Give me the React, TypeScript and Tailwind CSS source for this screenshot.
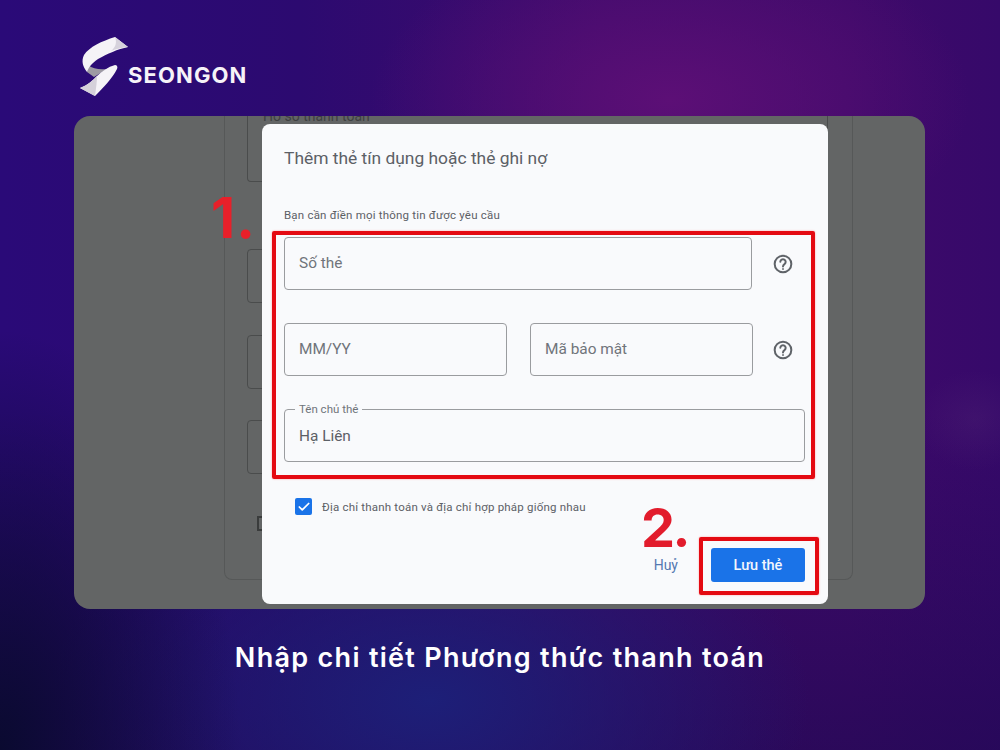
import { Check } from "lucide-react";

function Logo() {
  return (
    <svg width="50" height="60" viewBox="0 0 50 60" className="shrink-0">
      <path d="M8 29 L7 36 L14 41 L27 33 C20 34 13 33 8 29 Z" fill="#9d9aa3" />
      <path d="M35 1 C22 5 9 11 4 19 C1 25 3 31 7 36 C9 31 11 28 18 23 C27 18 38 13 48 11 Z" fill="#f5f3f7" />
      <path d="M35 1 L48 11 C42 11.5 36 13 31 15 C36 11 37 6 35 1 Z" fill="#d6d2dc" />
      <path d="M35 29 C37 29 38 31 37 33 C32 43 23 52 15 60 L0 52 C8 49 13 44 17 40 C22 35 28 31 35 29 Z" fill="#f5f3f7" />
      <path d="M17 40 C13 44 8 49 0 52 L15 60 C16 52 17 46 17 40 Z" fill="#d5d1da" />
    </svg>
  );
}

function Help() {
  return (
    <svg width="20" height="20" viewBox="0 0 24 24" className="shrink-0" fill="none" stroke="#5f6368" strokeWidth="2.4">
      <circle cx="12" cy="12" r="10" />
      <path d="M8.8 9.4a3.2 3.2 0 1 1 5 2.7c-1.2.8-1.8 1.4-1.8 2.9" strokeLinecap="round" />
      <circle cx="12" cy="18" r="0.6" fill="#5f6368" strokeWidth="1.2" />
    </svg>
  );
}

function Field({ text, className }: { text: string; className: string }) {
  return (
    <div className={`h-[53px] rounded-[4px] border border-[#9a9c9f] pl-[14px] flex items-center text-[15.4px] text-[#70747a] ${className}`}>
      {text}
    </div>
  );
}

export default function App() {
  return (
    <div className="relative w-[1000px] h-[750px] overflow-hidden font-['Roboto',sans-serif] bg-[radial-gradient(ellipse_300px_170px_at_670px_100px,#5c0f76_0%,rgba(92,15,118,0)_100%),radial-gradient(ellipse_240px_420px_at_0px_750px,#0a0a30_0%,rgba(10,10,48,0)_100%),radial-gradient(ellipse_380px_230px_at_430px_700px,#1d1f78_0%,rgba(29,31,120,0)_100%),radial-gradient(ellipse_60px_50px_at_975px_420px,rgba(90,50,120,0.22)_0%,rgba(90,50,120,0)_100%),linear-gradient(180deg,rgba(30,8,80,0)_55%,rgba(30,8,80,0.6)_100%),linear-gradient(90deg,#2a0a78_0%,#2c0a70_30%,#3f0b6c_60%,#3f0a6a_85%,#36096a_100%)]">
      <header className="h-[116px] pl-[80px] pt-[36px] flex items-start">
        <Logo />
        <span className="mt-[26px] -ml-[2px] text-[22px] leading-[26px] font-bold tracking-[1.1px] text-[#f6f3f8] font-['Inter',sans-serif]">
          SEONGON
        </span>
      </header>

      <div className="relative mx-[74px] w-[851px] h-[493px] overflow-hidden rounded-2xl bg-[#636565]">
        <div className="ml-[150px] w-[629px] h-[464px] rounded-b-lg border border-t-0 border-[#565858] flex flex-col pl-[22px] pr-[24px]">
          <div className="relative h-[66px] rounded-b border border-t-0 border-[#4a4c4c]">
            <span className="absolute left-[15px] top-[-8px] text-[14px] leading-[16px] text-[#3f4141]">Hồ sơ thanh toán</span>
          </div>
          <div className="mt-[67px] h-[54px] rounded border border-[#4a4c4c]" />
          <div className="mt-[32px] h-[54px] rounded border border-[#4a4c4c]" />
          <div className="mt-[31px] h-[54px] rounded border border-[#4a4c4c]" />
          <div className="mt-[42px] ml-[10px] w-[15px] h-[15px] border-2 border-[#3a3c3c]" />
        </div>

        {/* modal */}
        <div className="absolute left-[188px] top-[8px] w-[566px] h-[480px] rounded-lg bg-[#f9fafc] pl-[22px] pr-[23px] flex flex-col">
          <h2 className="mt-[22px] text-[17.4px] leading-[24px] text-[#5c6066]">Thêm thẻ tín dụng hoặc thẻ ghi nợ</h2>
          <p className="mt-[37px] text-[11.5px] leading-[16px] tracking-[0.2px] text-[#5c6066]">Bạn cần điền mọi thông tin được yêu cầu</p>

          <div className="mt-[14px] flex items-center gap-[21px]">
            <Field text="Số thẻ" className="w-[468px]" />
            <Help />
          </div>
          <div className="mt-[33px] flex items-center">
            <Field text="MM/YY" className="w-[223px]" />
            <Field text="Mã bảo mật" className="w-[223px] ml-[23px]" />
            <div className="ml-[20px]">
              <Help />
            </div>
          </div>
          <div className="relative mt-[33px] h-[53px] w-[521px] rounded-[4px] border border-[#9a9c9f] pl-[14px] flex items-center text-[15.4px] text-[#5c6066]">
            <span className="absolute left-[10px] top-[-7px] px-[4px] bg-[#f9fafc] text-[11.5px] leading-[13px] text-[#70747a]">Tên chủ thẻ</span>
            <span className="mt-[2px]">Hạ Liên</span>
          </div>

          <div className="mt-[36px] ml-[11px] flex items-center gap-[10px]">
            <span className="w-[17px] h-[17px] rounded-[2px] bg-[#1a73e8] flex items-center justify-center">
              <Check size={14} strokeWidth={3} color="#ffffff" />
            </span>
            <span className="text-[11.5px] leading-[16px] tracking-[0.2px] text-[#5c6066]">Địa chỉ thanh toán và địa chỉ hợp pháp giống nhau</span>
          </div>

          <div className="mt-[33px] flex items-center justify-end">
            <span className="text-[14px] text-[#5478b0] mr-[33px]">Huỷ</span>
            <button className="w-[94px] h-[34px] rounded-[3px] bg-[#1a73e8] pt-[1px] text-[14.5px] font-medium text-[#f2f6fd]">Lưu thẻ</button>
          </div>
        </div>

        {/* red annotations */}
        <div className="absolute left-[198px] top-[115px] w-[543px] h-[248px] border-[4px] border-[#e40a12] rounded-[2px] shadow-[0_0_2px_#ff9a9a]" />
        <div className="absolute left-[625px] top-[421px] w-[120px] h-[58px] border-[4px] border-[#e40a12] rounded-[2px] shadow-[0_0_2px_#ff9a9a]" />
        <span className="absolute left-[137px] top-[81px] text-[56px] leading-[42px] font-bold tracking-[1px] text-[#e8202a] font-['Inter',sans-serif]">1.</span>
        <span className="absolute left-[567px] top-[392px] text-[54px] leading-[40px] font-bold tracking-[-2.5px] text-[#e21c2c] font-['Inter',sans-serif]">2.</span>
      </div>

      <p className="mt-[32px] text-center text-[27px] leading-[34px] font-semibold tracking-[1.3px] text-white font-['Inter',sans-serif]">
        Nhập chi tiết Phương thức thanh toán
      </p>
    </div>
  );
}
